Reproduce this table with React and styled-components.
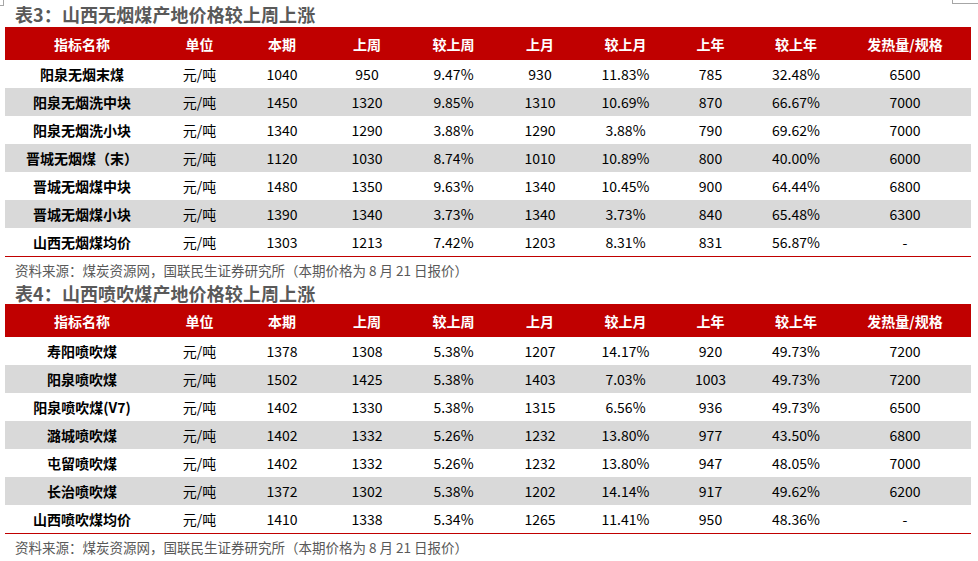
import React from 'react'
import styled, { createGlobalStyle } from 'styled-components'

const GlobalStyle = createGlobalStyle`
  html, body {
    margin: 0;
    padding: 0;
    background: #fff;
  }
  body {
    font-family: "Noto Sans CJK SC", "Microsoft YaHei", sans-serif;
    color: #000;
  }
`

const COLS = '154px 81px 84px 86px 87px 86px 85px 85px 86px 132px'

const HEAD = ['指标名称', '单位', '本期', '上周', '较上周', '上月', '较上月', '上年', '较上年', '发热量/规格']

const table3 = [
  ['阳泉无烟末煤', '元/吨', '1040', '950', '9.47%', '930', '11.83%', '785', '32.48%', '6500'],
  ['阳泉无烟洗中块', '元/吨', '1450', '1320', '9.85%', '1310', '10.69%', '870', '66.67%', '7000'],
  ['阳泉无烟洗小块', '元/吨', '1340', '1290', '3.88%', '1290', '3.88%', '790', '69.62%', '7000'],
  ['晋城无烟煤（末）', '元/吨', '1120', '1030', '8.74%', '1010', '10.89%', '800', '40.00%', '6000'],
  ['晋城无烟煤中块', '元/吨', '1480', '1350', '9.63%', '1340', '10.45%', '900', '64.44%', '6800'],
  ['晋城无烟煤小块', '元/吨', '1390', '1340', '3.73%', '1340', '3.73%', '840', '65.48%', '6300'],
  ['山西无烟煤均价', '元/吨', '1303', '1213', '7.42%', '1203', '8.31%', '831', '56.87%', '-'],
]

const table4 = [
  ['寿阳喷吹煤', '元/吨', '1378', '1308', '5.38%', '1207', '14.17%', '920', '49.73%', '7200'],
  ['阳泉喷吹煤', '元/吨', '1502', '1425', '5.38%', '1403', '7.03%', '1003', '49.73%', '7200'],
  ['阳泉喷吹煤(V7)', '元/吨', '1402', '1330', '5.38%', '1315', '6.56%', '936', '49.73%', '6500'],
  ['潞城喷吹煤', '元/吨', '1402', '1332', '5.26%', '1232', '13.80%', '977', '43.50%', '6800'],
  ['屯留喷吹煤', '元/吨', '1402', '1332', '5.26%', '1232', '13.80%', '947', '48.05%', '7000'],
  ['长治喷吹煤', '元/吨', '1372', '1302', '5.38%', '1202', '14.14%', '917', '49.62%', '6200'],
  ['山西喷吹煤均价', '元/吨', '1410', '1338', '5.34%', '1265', '11.41%', '950', '48.36%', '-'],
]

const Page = styled.div`
  position: relative;
  width: 978px;
  height: 561px;
  overflow: hidden;
`

const CornerMark = styled.span`
  position: absolute;
  top: 0;
  ${p => p.$right ? 'left: 952px; width: 26px; height: 3px; border-left: 1px solid #a6a6a6;' : 'left: 0; width: 3px; height: 5px; border-right: 1px solid #a6a6a6;'}
  border-bottom: 1px solid #a6a6a6;
`

const Section = styled.section`
  display: flex;
  flex-direction: column;
  padding-left: 5px;
`

const Title = styled.h2`
  margin: 0;
  height: ${p => p.$h}px;
  display: flex;
  align-items: center;
  padding-left: 10px;
  font-size: 18px;
  font-weight: 700;
  color: #595959;
  letter-spacing: 0.1px;
  white-space: nowrap;
`

const Table = styled.div`
  width: 966px;
  display: flex;
  flex-direction: column;
  border-bottom: 1px solid #c00000;
`

const Row = styled.div`
  display: grid;
  grid-template-columns: ${COLS};
  height: ${p => p.$head ? 33 : 28}px;
  background: ${p => p.$head ? '#c00000' : p.$shade ? '#d9d9d9' : '#fff'};
  color: ${p => p.$head ? '#fff' : '#000'};
  font-weight: ${p => p.$head ? 700 : 400};
`

const Cell = styled.div`
  display: flex;
  align-items: center;
  justify-content: center;
  font-size: 14px;
  white-space: nowrap;
  font-weight: ${p => p.$first ? 700 : 'inherit'};
`

const Source = styled.div`
  height: 25px;
  display: flex;
  align-items: center;
  padding-left: 10px;
  font-size: 13.5px;
  color: #595959;
  white-space: nowrap;
`

function DataTable({ rows }) {
  return (
    <Table>
      <Row $head>
        {HEAD.map((h, i) => <Cell key={i} $first={i === 0}>{h}</Cell>)}
      </Row>
      {rows.map((r, ri) => (
        <Row key={ri} $shade={ri % 2 === 1}>
          {r.map((v, i) => <Cell key={i} $first={i === 0}>{v}</Cell>)}
        </Row>
      ))}
    </Table>
  )
}

export default function App() {
  return (
    <Page>
      <GlobalStyle />
      <CornerMark />
      <CornerMark $right />
      <Section>
        <Title $h={27}>表3：山西无烟煤产地价格较上周上涨</Title>
        <DataTable rows={table3} />
        <Source>资料来源：煤炭资源网，国联民生证券研究所（本期价格为 8 月 21 日报价）</Source>
        <Title $h={22}>表4：山西喷吹煤产地价格较上周上涨</Title>
        <DataTable rows={table4} />
        <Source>资料来源：煤炭资源网，国联民生证券研究所（本期价格为 8 月 21 日报价）</Source>
      </Section>
    </Page>
  )
}
